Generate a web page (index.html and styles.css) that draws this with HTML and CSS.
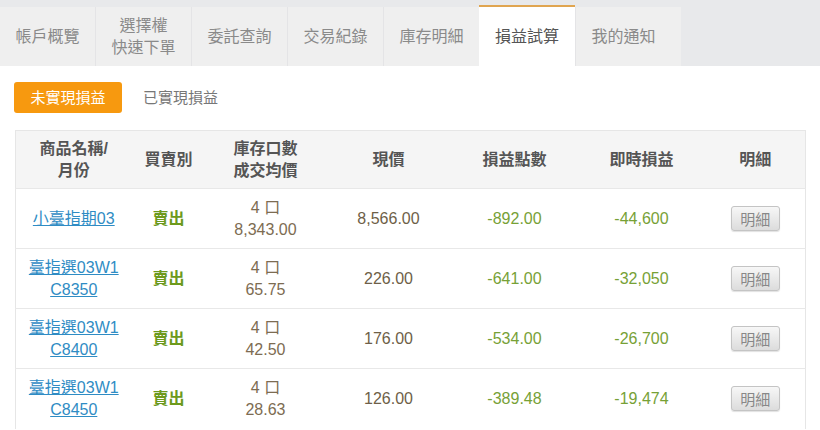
FILE: index.html
```html
<!DOCTYPE html>
<html lang="zh-Hant">
<head>
<meta charset="utf-8">
<title>損益試算</title>
<link rel="stylesheet" href="styles.css">
</head>
<body>
<div class="band">
  <nav class="tabs">
    <div class="tab">帳戶概覽</div>
    <div class="tab two">選擇權<br>快速下單</div>
    <div class="tab">委託查詢</div>
    <div class="tab">交易紀錄</div>
    <div class="tab">庫存明細</div>
    <div class="tab active">損益試算</div>
    <div class="tab last">我的通知</div>
  </nav>
</div>
<main class="content">
  <div class="subtabs">
    <span class="sub on">未實現損益</span>
    <span class="sub">已實現損益</span>
  </div>
  <table class="grid">
    <colgroup>
      <col class="c1"><col class="c2"><col class="c3"><col class="c4"><col class="c5"><col class="c6"><col class="c7">
    </colgroup>
    <thead>
      <tr>
        <th>商品名稱/<br>月份</th>
        <th>買賣別</th>
        <th>庫存口數<br>成交均價</th>
        <th>現價</th>
        <th>損益點數</th>
        <th>即時損益</th>
        <th>明細</th>
      </tr>
    </thead>
    <tbody>
      <tr>
        <td><a href="#">小臺指期03</a></td>
        <td class="side">賣出</td>
        <td class="qty">4 口<br>8,343.00</td>
        <td class="price">8,566.00</td>
        <td class="neg">-892.00</td>
        <td class="neg">-44,600</td>
        <td><button class="btn">明細</button></td>
      </tr>
      <tr>
        <td><a href="#">臺指選03W1<br>C8350</a></td>
        <td class="side">賣出</td>
        <td class="qty">4 口<br>65.75</td>
        <td class="price">226.00</td>
        <td class="neg">-641.00</td>
        <td class="neg">-32,050</td>
        <td><button class="btn">明細</button></td>
      </tr>
      <tr>
        <td><a href="#">臺指選03W1<br>C8400</a></td>
        <td class="side">賣出</td>
        <td class="qty">4 口<br>42.50</td>
        <td class="price">176.00</td>
        <td class="neg">-534.00</td>
        <td class="neg">-26,700</td>
        <td><button class="btn">明細</button></td>
      </tr>
      <tr>
        <td><a href="#">臺指選03W1<br>C8450</a></td>
        <td class="side">賣出</td>
        <td class="qty">4 口<br>28.63</td>
        <td class="price">126.00</td>
        <td class="neg">-389.48</td>
        <td class="neg">-19,474</td>
        <td><button class="btn">明細</button></td>
      </tr>
    </tbody>
  </table>
</main>
</body>
</html>
```

FILE: styles.css
```css
* { box-sizing: border-box; }
html, body {
  margin: 0;
  padding: 0;
  background: #ffffff;
  font-family: "Liberation Sans", "Noto Sans CJK TC", sans-serif;
  color: #555;
}
.band {
  background: #e8e9eb;
  height: 66px;
  padding-top: 7px;
}
.tabs {
  display: flex;
  height: 59px;
}
.tab {
  width: 96px;
  background: #efefef;
  border-left: 1px solid #e4e4e6;
  color: #8a8a8a;
  font-size: 16px;
  line-height: 22px;
  display: flex;
  align-items: center;
  justify-content: center;
  text-align: center;
}
.tab:first-child { border-left: none; width: 95px; }
.tab.last { width: 106px; padding-right: 10px; }
.tab.active {
  background: #ffffff;
  color: #555;
  border-top: 2px solid #e0a550;
  margin-top: -2px;
  height: 61px;
  border-left: none;
}
.content {
  padding: 16px 15px 0 14px;
}
.subtabs {
  display: flex;
  align-items: center;
  gap: 21px;
  height: 31px;
}
.sub {
  font-size: 15px;
  color: #777;
  line-height: 31px;
}
.sub.on {
  background: #f7990f;
  color: #fff;
  border-radius: 3px;
  padding: 0 16px;
  width: 108px;
  text-align: center;
}
.grid {
  margin-top: 17px;
  margin-left: 1px;
  width: 790px;
  border-collapse: collapse;
  table-layout: fixed;
  border-left: 1px solid #e6e6e6;
  border-right: 1px solid #e6e6e6;
}
.c1 { width: 116px; }
.c2 { width: 74px; }
.c3 { width: 120px; }
.c4 { width: 126px; }
.c5 { width: 126px; }
.c6 { width: 128px; }
.c7 { width: 100px; }
.grid th {
  background: #f5f5f5;
  border-top: 1px solid #e6e6e6;
  height: 58px;
  font-size: 16px;
  line-height: 22px;
  font-weight: bold;
  color: #555;
  padding: 0;
  text-align: center;
  vertical-align: middle;
}
.grid td {
  border-top: 1px solid #e8e8e8;
  height: 60px;
  padding: 0;
  text-align: center;
  vertical-align: middle;
  font-size: 16px;
  line-height: 22px;
}
.grid a {
  color: #2f8cc4;
  text-decoration: underline;
}
.side {
  color: #6c9a1c;
  font-weight: bold;
}
.qty { color: #7d6c52; }
.price { color: #6e5f48; }
.neg { color: #77a136; }
.btn {
  width: 49px;
  height: 25px;
  padding: 0;
  font-family: "Noto Sans CJK TC", sans-serif;
  font-size: 15px;
  line-height: 23px;
  color: #888;
  background: linear-gradient(#f7f7f7, #dcdcdc);
  border: 1px solid #c4c4c4;
  border-radius: 3px;
  box-shadow: 0 1px 1px rgba(0,0,0,0.12);
}
```
